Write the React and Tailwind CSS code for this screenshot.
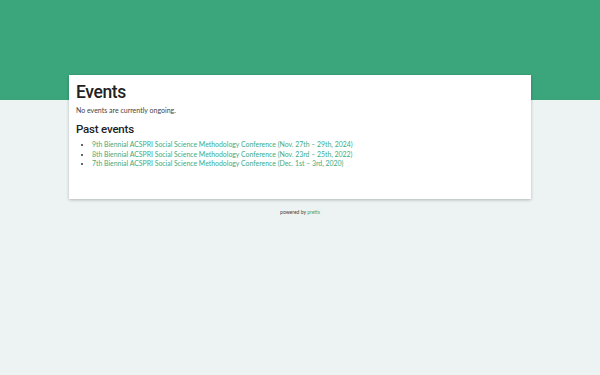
export default function App() {
  const events = [
    "9th Biennial ACSPRI Social Science Methodology Conference (Nov. 27th – 29th, 2024)",
    "8th Biennial ACSPRI Social Science Methodology Conference (Nov. 23rd – 25th, 2022)",
    "7th Biennial ACSPRI Social Science Methodology Conference (Dec. 1st – 3rd, 2020)",
  ];
  return (
    <div className="relative min-h-[375px] w-[600px] bg-[#edf3f2]" style={{ fontFamily: "Lato, 'Open Sans', sans-serif" }}>
      <div className="h-[100px] bg-[#3ba57c]" />
      <div className="absolute left-[69px] top-[75px] w-[462px]">
        <div className="h-[124px] bg-white px-[7px] pt-[6px] shadow-[0_1px_3px_rgba(0,0,0,0.25)]">
          <h1 className="text-[17.5px] font-medium leading-[22px] tracking-[-0.4px] text-[#222]" style={{ fontFamily: "Roboto, sans-serif" }}>Events</h1>
          <p className="mt-[2px] text-[7px] leading-[10px] text-[#444]">No events are currently ongoing.</p>
          <h2 className="mt-[6px] text-[11.5px] font-medium leading-[16px] tracking-[-0.2px] text-[#222]" style={{ fontFamily: "Roboto, sans-serif" }}>Past events</h2>
          <ul className="mt-[3px] list-disc pl-[16px] text-[6.9px] leading-[9.7px] text-[#40ab82] marker:text-[#333]">
            {events.map((e) => (
              <li key={e}>{e}</li>
            ))}
          </ul>
        </div>
        <div className="mt-[9px] text-center text-[5px] leading-[8px] text-[#444]">
          powered by <span className="text-[#3ba57c]">pretix</span>
        </div>
      </div>
    </div>
  );
}
